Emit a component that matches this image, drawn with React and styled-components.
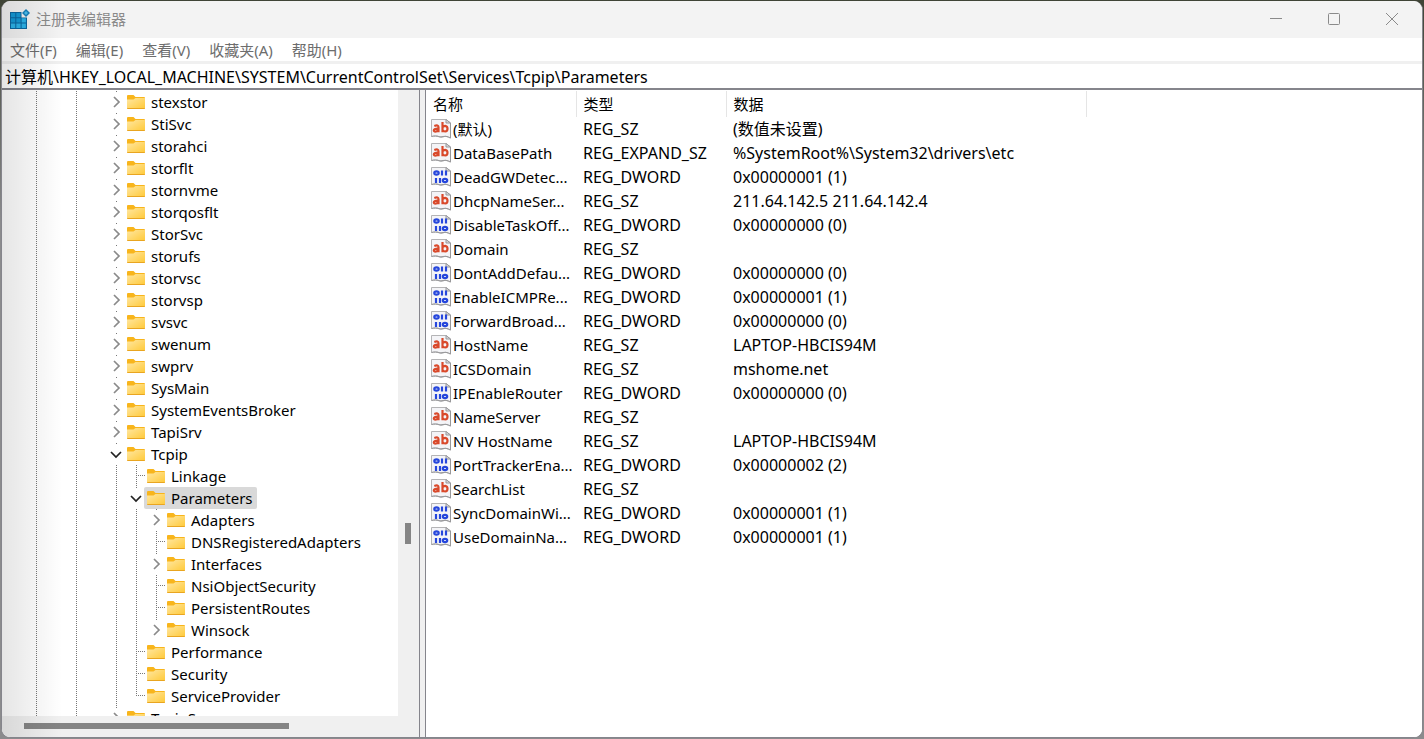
import React, { useState } from "react";
import styled, { createGlobalStyle } from "styled-components";

const menus = ["文件(F)", "编辑(E)", "查看(V)", "收藏夹(A)", "帮助(H)"];

// guides: one letter per indent slot, "|" line, " " empty,
// "t" branch, "l" last branch, "c" collapsed toggle, "o" open toggle
const treeRows = [
  ["| | c", "stexstor"],
  ["| | c", "StiSvc"],
  ["| | c", "storahci"],
  ["| | c", "storflt"],
  ["| | c", "stornvme"],
  ["| | c", "storqosflt"],
  ["| | c", "StorSvc"],
  ["| | c", "storufs"],
  ["| | c", "storvsc"],
  ["| | c", "storvsp"],
  ["| | c", "svsvc"],
  ["| | c", "swenum"],
  ["| | c", "swprv"],
  ["| | c", "SysMain"],
  ["| | c", "SystemEventsBroker"],
  ["| | c", "TapiSrv"],
  ["| | o", "Tcpip"],
  ["| | |t", "Linkage"],
  ["| | |o", "Parameters"],
  ["| | ||c", "Adapters"],
  ["| | ||t", "DNSRegisteredAdapters"],
  ["| | ||c", "Interfaces"],
  ["| | ||t", "NsiObjectSecurity"],
  ["| | ||t", "PersistentRoutes"],
  ["| | ||c", "Winsock"],
  ["| | |t", "Performance"],
  ["| | |t", "Security"],
  ["| | |l", "ServiceProvider"],
  ["| | c", "TcpipSvc"],
];

const values = [
  ["(默认)", "REG_SZ", "(数值未设置)"],
  ["DataBasePath", "REG_EXPAND_SZ", "%SystemRoot%\\System32\\drivers\\etc"],
  ["DeadGWDetec...", "REG_DWORD", "0x00000001 (1)"],
  ["DhcpNameSer...", "REG_SZ", "211.64.142.5 211.64.142.4"],
  ["DisableTaskOff...", "REG_DWORD", "0x00000000 (0)"],
  ["Domain", "REG_SZ", ""],
  ["DontAddDefau...", "REG_DWORD", "0x00000000 (0)"],
  ["EnableICMPRe...", "REG_DWORD", "0x00000001 (1)"],
  ["ForwardBroad...", "REG_DWORD", "0x00000000 (0)"],
  ["HostName", "REG_SZ", "LAPTOP-HBCIS94M"],
  ["ICSDomain", "REG_SZ", "mshome.net"],
  ["IPEnableRouter", "REG_DWORD", "0x00000000 (0)"],
  ["NameServer", "REG_SZ", ""],
  ["NV HostName", "REG_SZ", "LAPTOP-HBCIS94M"],
  ["PortTrackerEna...", "REG_DWORD", "0x00000002 (2)"],
  ["SearchList", "REG_SZ", ""],
  ["SyncDomainWi...", "REG_DWORD", "0x00000001 (1)"],
  ["UseDomainNa...", "REG_DWORD", "0x00000001 (1)"],
];

const LogoIcon = () => (
  <svg width="20" height="20" viewBox="0 0 20 20" aria-hidden="true">
    <path fill="#0b67a0" d="M0 3h11.500v5.500H17V20H0z" />
    <path fill="#1499d6" d="M1 4h4.300v4.300H1zM6.300 4h4.300v4.300H6.300zM1 9.300h4.300v4.300H1zM6.300 9.300h4.300v4.300H6.300z" />
    <path fill="#2cb4ea" d="M11.600 9.300h4.300v4.300h-4.300zM1 14.600h4.300v4.300H1zM6.300 14.600h4.300v4.300H6.300zM11.600 14.600h4.300v4.300h-4.300z" />
    <path fill="#1580bc" d="M16 0l4 4-4 4-4-4z" />
    <path fill="#4cc0ee" d="M16 2l2 2-2 2-2-2z" />
  </svg>
);

const FolderIcon = () => (
  <svg width="18" height="14" viewBox="0 0 18 14" aria-hidden="true">
    <defs>
      <linearGradient id="folder" x1="0" y1="0" x2="1" y2="1">
        <stop offset="0" stopColor="#ffe7a2" />
        <stop offset="1" stopColor="#ffc937" />
      </linearGradient>
    </defs>
    <path fill="#f8b51c" d="M0 1q0-1 1-1h5.500l2 2H17q1 0 1 1v4H0z" />
    <path fill="url(#folder)" d="M0 4.500h6.500L8.500 3H18v10q0 1-1 1H1q-1 0-1-1z" />
    <path fill="#e9a520" d="M0 13h18q0 1-1 1H1q-1 0-1-1z" />
  </svg>
);

const ValueIcon = ({ binary }) => (
  <svg width="20" height="20" viewBox="0 0 20 20" aria-hidden="true">
    <path
      fill="#f4f4f7"
      stroke="#b4b4b6"
      d="M.5.500h14.500l4.500 3.500v15q-2-.3-3.500-1.300t-4 .3-4-.3-3.500-.7-4 .500z"
    />
    <path
      fill="none"
      stroke="#98989a"
      d="M.5 17.500q2.500-1 4-.5t3.500.7 4-.2 4 0 3.500 1.500V4"
    />
    <path fill="#dcdcde" stroke="#98989a" d="M15 .5V4h4.500z" />
    {binary ? (
      <g fill="none" stroke="#2647dc" strokeWidth="2.200">
        <ellipse cx="5.500" cy="6" rx="2.200" ry="1.700" />
        <path d="M11 3.500v5M15 3.500v5M5 11v5M9 11v5" />
        <ellipse cx="14" cy="13.500" rx="2.200" ry="1.700" />
      </g>
    ) : (
      <g
        fill="none"
        stroke="#d9492b"
        strokeWidth="2.200"
        transform="translate(0 .5)"
      >
        <path d="M3.300 6.500q4.200-1.500 4.200 1.200v5.100M7.500 9.200q-4.700-.3-4.700 1.500 0 1.800 2.200 1.300 2.500-.5 2.500-2.800" />
        <path d="M11.500 2.500v10.300M11.500 8q1-1.700 2.600-1.700 2.400.4 2.400 2.900t-2.400 2.800q-1.600 0-2.600-1.500" />
      </g>
    )}
  </svg>
);

const App = () => {
  const [selected, setSelected] = useState("Parameters");

  return (
    <>
      <GlobalStyle />
      <Desktop>
        <Window>
          <TitleBar>
            <LogoIcon />
            <Title>注册表编辑器</Title>
            <CaptionButton aria-label="最小化">
              <svg width="14" height="14" viewBox="0 0 14 14">
                <path d="M1 6.500h12" />
              </svg>
            </CaptionButton>
            <CaptionButton aria-label="最大化">
              <svg width="14" height="14" viewBox="0 0 14 14">
                <rect x="1.500" y="1.500" width="11" height="11" rx="1" />
              </svg>
            </CaptionButton>
            <CaptionButton aria-label="关闭">
              <svg width="14" height="14" viewBox="0 0 14 14">
                <path d="M1 1l12 12M13 1L1 13" />
              </svg>
            </CaptionButton>
          </TitleBar>
          <MenuBar>
            {menus.map((menu) => (
              <MenuButton key={menu}>{menu}</MenuButton>
            ))}
          </MenuBar>
          <AddressInput
            aria-label="地址"
            defaultValue="计算机\HKEY_LOCAL_MACHINE\SYSTEM\CurrentControlSet\Services\Tcpip\Parameters"
          />
          <Panes>
            <TreePane>
              <TreeBody>
                <Tree>
                  {treeRows.map(([guides, name]) => (
                    <TreeRow key={name}>
                      {guides.split("").map((kind, i) =>
                        kind === "c" || kind === "o" ? (
                          <Toggle key={i} $open={kind === "o"} aria-label={name}>
                            <svg width="14" height="14" viewBox="0 0 14 14">
                              <path
                                d={kind === "o" ? "M2 5l5 5 5-5" : "M5 2l5 5-5 5"}
                              />
                            </svg>
                          </Toggle>
                        ) : (
                          <Guide key={i} $kind={kind} />
                        )
                      )}
                      <KeyButton
                        $selected={selected === name}
                        onClick={() => setSelected(name)}
                      >
                        <FolderIcon />
                        {name}
                      </KeyButton>
                    </TreeRow>
                  ))}
                </Tree>
                <VerticalBar>
                  <VerticalThumb />
                </VerticalBar>
              </TreeBody>
              <HorizontalBar>
                <HorizontalThumb />
              </HorizontalBar>
            </TreePane>
            <ListPane>
              <ValueTable>
                <colgroup>
                  <Col $width={150} />
                  <Col $width={150} />
                  <Col $width={360} />
                  <col />
                </colgroup>
                <thead>
                  <tr>
                    <HeadCell>名称</HeadCell>
                    <HeadCell>类型</HeadCell>
                    <HeadCell>数据</HeadCell>
                    <td />
                  </tr>
                </thead>
                <tbody>
                  {values.map(([name, type, data]) => (
                    <tr key={name}>
                      <NameCell>
                        <ValueName>
                          <ValueIcon binary={type === "REG_DWORD"} />
                          {name}
                        </ValueName>
                      </NameCell>
                      <Cell>{type}</Cell>
                      <Cell>{data}</Cell>
                      <td />
                    </tr>
                  ))}
                </tbody>
              </ValueTable>
            </ListPane>
          </Panes>
        </Window>
      </Desktop>
    </>
  );
};

export default App;

const GlobalStyle = createGlobalStyle`
  * {
    box-sizing: border-box;
  }
  body {
    margin: 0;
    overflow: hidden;
    color: #000;
    font-family: "Noto Sans", "Noto Sans CJK SC", sans-serif;
    font-size: 15px;
  }
  button, input {
    margin: 0;
    border: none;
    color: inherit;
    font: inherit;
  }
`;

const Desktop = styled.div`
  display: flex;
  height: 100vh;
  padding: 1px;
  background: linear-gradient(#3f4436, #8b8b8d 30%, #8b8b8d);
`;

const Window = styled.div`
  position: relative;
  display: flex;
  flex: 1;
  flex-direction: column;
  min-width: 0;
  overflow: hidden;
  border: 1px solid #85858c;
  border-top: none;
  border-radius: 9px;
  background: #fff;

  /* soft shade along the left edge */
  &::after {
    content: "";
    position: absolute;
    inset: 0 auto 0 0;
    width: 60px;
    background: linear-gradient(90deg, rgba(0, 0, 0, 0.1), rgba(0, 0, 0, 0));
    pointer-events: none;
  }
`;

const TitleBar = styled.header`
  display: flex;
  flex: none;
  align-items: center;
  height: 37px;
  padding: 0 1px 1px 8px;
  background: #f3f3f3;
`;

const Title = styled.div`
  flex: 1;
  padding-left: 6px;
  color: #8a8a8a;
  line-height: 34px;
`;

const CaptionButton = styled.button`
  display: flex;
  align-items: center;
  justify-content: center;
  width: 58px;
  height: 36px;
  padding: 0;
  background: none;

  svg {
    fill: none;
    stroke: #8a8a8a;
  }
`;

const MenuBar = styled.nav`
  display: flex;
  flex: none;
  height: 26px;
  padding-left: 8px;
  gap: 19px;
  border-bottom: 3px solid #f0f0f0;
`;

const MenuButton = styled.button`
  padding: 2px 0 0;
  background: none;
  color: #6d6d6d;
  line-height: 21px;
`;

const AddressInput = styled.input`
  flex: none;
  width: 100%;
  height: 26px;
  padding: 0 3px 1px;
  border-bottom: 2px solid #85858c;
  outline: none;
  background: #fff;
  font-size: 16px;
`;

const Panes = styled.main`
  display: flex;
  flex: 1;
  min-height: 0;
  gap: 5px;
  background: #f0f0f0;
`;

const TreePane = styled.section`
  display: flex;
  flex: none;
  flex-direction: column;
  width: 418px;
  border-right: 1px solid #85858c;
`;

const TreeBody = styled.div`
  display: flex;
  flex: 1;
  min-height: 0;
`;

const Tree = styled.ul`
  flex: 1;
  margin: 0;
  padding: 1px 0 0 24px;
  overflow: hidden;
  background: #fff;
  list-style: none;
`;

const TreeRow = styled.li`
  display: flex;
  height: 22px;
`;

const dots = "#777 0 1px, transparent 1px 2px";

const Guide = styled.span`
  flex: none;
  width: 20px;
  background-image: ${({ $kind }) =>
    $kind === " "
      ? "none"
      : `repeating-linear-gradient(180deg, ${dots}), repeating-linear-gradient(90deg, ${dots})`};
  background-position: 10px 0, 10px 10px;
  background-repeat: no-repeat;
  background-size: ${({ $kind }) =>
    `1px ${$kind === "l" ? "11px" : "100%"}, ${$kind === "|" ? "0 0" : "9px 1px"}`};
`;

const Toggle = styled.button`
  display: flex;
  flex: none;
  align-items: center;
  justify-content: center;
  width: 20px;
  padding: 0;
  background: linear-gradient(#777, #777) 10px 0 / 1px 1px no-repeat;

  svg {
    fill: none;
    stroke: ${({ $open }) => ($open ? "#222" : "#8a8a8a")};
    stroke-width: 1.7;
  }
`;

const KeyButton = styled.button`
  display: flex;
  align-items: center;
  gap: 6px;
  margin-left: -2px;
  padding: 0 4px 0 3px;
  border-radius: 2px;
  background: ${({ $selected }) => ($selected ? "#d9d9d9" : "none")};
  line-height: 22px;
  white-space: nowrap;
`;

const VerticalBar = styled.div`
  display: flex;
  flex: none;
  flex-direction: column;
  justify-content: flex-end;
  align-items: center;
  width: 21px;
  padding: 0 2px 172px 0;
`;

const VerticalThumb = styled.div`
  width: 6px;
  height: 21px;
  background: #858585;
`;

const HorizontalBar = styled.div`
  display: flex;
  flex: none;
  align-items: center;
  height: 21px;
  padding: 0 0 2px 22px;
`;

const HorizontalThumb = styled.div`
  width: 265px;
  height: 6px;
  background: #858585;
`;

const ListPane = styled.section`
  flex: 1;
  min-width: 0;
  overflow: hidden;
  border-left: 1px solid #85858c;
  background: #fff;
`;

const ValueTable = styled.table`
  width: 100%;
  margin-top: 1px;
  border-collapse: collapse;
  table-layout: fixed;
`;

const Col = styled.col`
  width: ${({ $width }) => $width}px;
`;

const HeadCell = styled.th`
  height: 26px;
  padding: 0 7px;
  border-right: 1px solid #e5e5e5;
  font-weight: 400;
  line-height: 24px;
  text-align: left;
`;

const Cell = styled.td`
  height: 24px;
  padding: 0 0 0 7px;
  font-size: 16px;
  line-height: 24px;
  white-space: nowrap;
`;

const NameCell = styled(Cell)`
  font-size: 15px;
`;

const ValueName = styled.div`
  display: flex;
  align-items: center;
  gap: 2px;
  height: 24px;
  margin-left: -2px;
`;
